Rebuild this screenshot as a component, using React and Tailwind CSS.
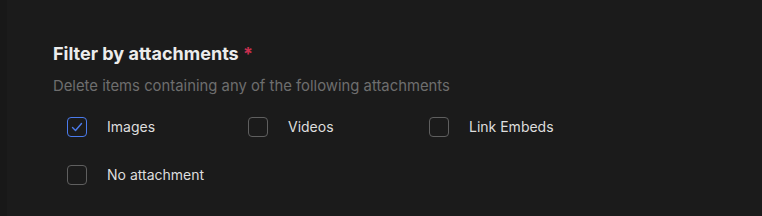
const options = [
  { label: 'Images', checked: true },
  { label: 'Videos', checked: false },
  { label: 'Link Embeds', checked: false },
  { label: 'No attachment', checked: false },
];

function Checkbox({ checked }) {
  return (
    <span
      className={`flex h-5 w-5 items-center justify-center rounded-[4px] border-[1.5px] ${
        checked ? 'border-[#4b7bec]' : 'border-[#5f5f5f]'
      }`}
    >
      {checked && (
        <svg viewBox="0 0 16 16" className="h-4 w-4" fill="none">
          <path d="M3.5 8.5l3 3 6-7" stroke="#4b7bec" strokeWidth="1.4" strokeLinecap="round" strokeLinejoin="round" />
        </svg>
      )}
    </span>
  );
}

export default function App() {
  return (
    <div className="flex h-[216px] w-[762px] bg-[#1b1b1b]" style={{ fontFamily: 'Inter, "Noto Sans", sans-serif' }}>
      <div className="w-[7px] bg-[#181818]" />
      <div className="flex-1 pl-[46px] pt-[42px]">
        <h2 className="text-[18px] font-bold leading-6 text-[#ececec]">
          Filter by attachments <span className="text-[#c9304f]">*</span>
        </h2>
        <p className="mt-[10px] text-[14.85px] leading-5 text-[#6e6e6e]">
          Delete items containing any of the following attachments
        </p>
        <div className="mt-[21px] grid grid-cols-[181px_181px_181px] gap-y-7 pl-[14px]">
          {options.map((o) => (
            <label key={o.label} className="flex h-5 items-center gap-5 text-sm text-[#dedede]">
              <Checkbox checked={o.checked} />
              {o.label}
            </label>
          ))}
        </div>
      </div>
    </div>
  );
}
